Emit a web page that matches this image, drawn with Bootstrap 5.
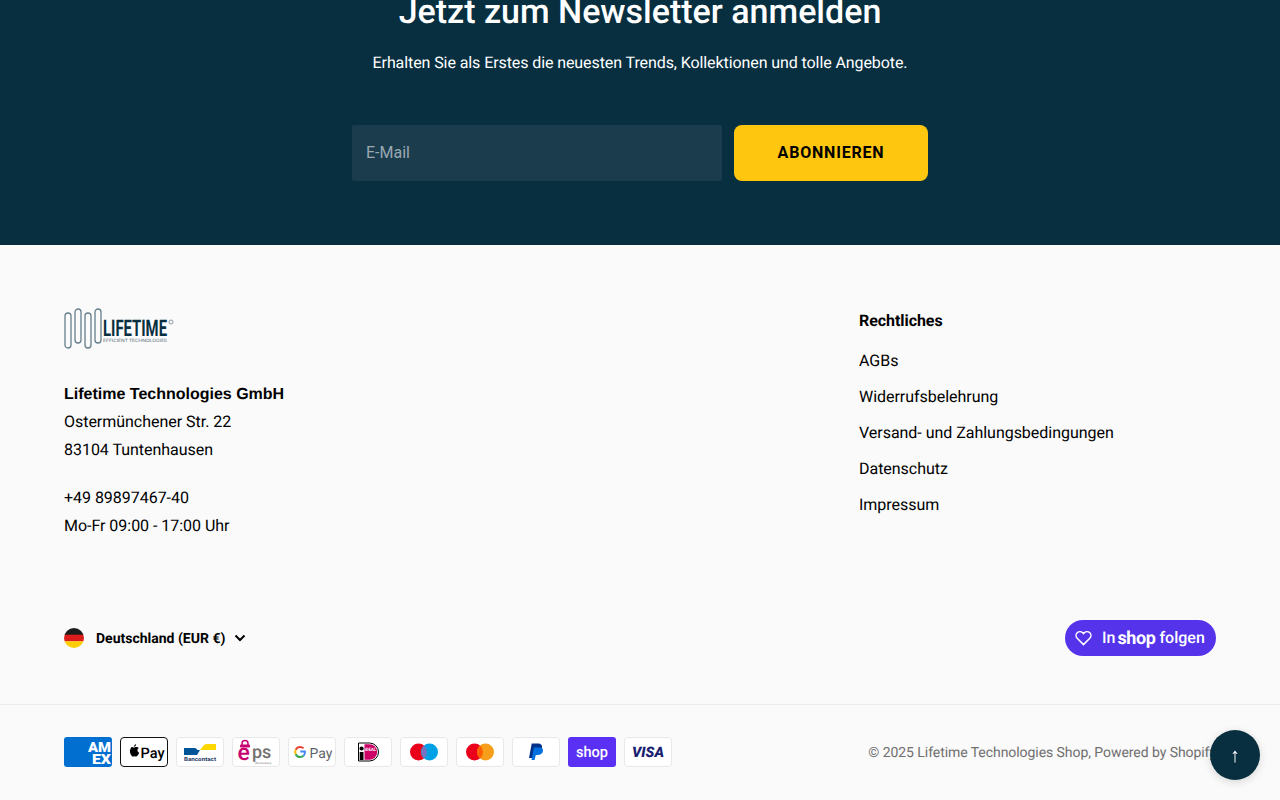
<!DOCTYPE html>
<html lang="de">
<head>
    <meta charset="utf-8">
    <title>Lifetime Technologies Shop</title>
    <link href="https://cdn.jsdelivr.net/npm/bootstrap@5.3.0/dist/css/bootstrap.min.css" rel="stylesheet">
    <style>
        html, body { height: 800px; overflow: hidden; }
        body { font-family: Roboto, "Liberation Sans", sans-serif; font-size: 16px; background: #fafafa; color: #000; text-rendering: geometricPrecision; }
        .news-block { background: #082f40; height: 245px; color: #fff; }
        .news-title { font-family: Roboto, sans-serif; font-size: 34px; line-height: 44px; font-weight: 500; margin: -10px 0 0; }
        .news-text { line-height: 24px; margin: 17px 0 0; letter-spacing: -0.09px; }
        .news-form { width: 576px; margin-top: 50px; }
        .news-input { flex: 1 1 auto; height: 56px; background: #1a3c4d; border: 0; border-radius: 2px; padding: 0 14px 2px; color: #fff; font-size: 16px; outline: 0; }
        .news-input::placeholder { color: #9aa9b1; opacity: 1; }
        .news-btn { width: 194px; height: 56px; background: #ffc60f; border: 0; border-radius: 8px; color: #000; font-weight: 700; font-size: 16px; letter-spacing: 0.8px; }
        .foot-main { padding: 63px 64px 0; height: 365px; }
        .foot-logo { display: block; width: 112px; height: 42px; overflow: visible; }
        .foot-company { font-family: "Liberation Sans", sans-serif; font-weight: 700; line-height: 28px; margin-top: 31px; margin-bottom: -1px; }
        .foot-line { line-height: 28px; letter-spacing: -0.03px; }
        .foot-gap { margin-top: 20px; }
        .legal-col { width: 357px; padding-top: 1px; }
        .legal-head { font-weight: 700; line-height: 24px; margin-bottom: 16px; letter-spacing: -0.06px; }
        .legal-link { display: block; color: #000; text-decoration: none; line-height: 24px; margin-bottom: 12px; letter-spacing: -0.03px; }
        .country-row { padding: 0 64px; height: 36px; margin-top: 10px; }
        .country-flag { width: 20px; height: 20px; border-radius: 50%; overflow: hidden; flex: none; }
        .country-name { font-size: 14px; font-weight: 700; margin-left: 12px; margin-right: 9px; padding-top: 2px; }
        .shop-follow { width: 151px; height: 36px; background: #5433eb; border-radius: 18px; color: #fff; font-size: 16px; font-weight: 500; padding-left: 10px; }
        .shop-heart { margin-right: 10px; }
        .shop-word { font-weight: 700; font-size: 18px; letter-spacing: -0.4px; margin: 0 4px 0 2px; }
        .foot-bottom { border-top: 1px solid #ececec; margin-top: 48px; padding: 32px 64px 0; }
        .pay-icons { gap: 8px; }
        .pay-icons svg { display: block; width: 48px; height: 30px; }
        .copy-text { font-size: 14px; color: #6f6f6f; white-space: nowrap; padding-top: 2px; letter-spacing: -0.06px; }
        .top-btn { right: 20px; bottom: 20px; width: 50px; height: 50px; background: #082f40; color: #fff; border-radius: 50%; font-size: 20px; box-shadow: 0 2px 8px rgba(0,0,0,.15); }
    </style>
</head>
<body>
    <!-- Newsletter -->
    <section class="news-block text-center d-flex flex-column align-items-center">
        <h2 class="news-title">Jetzt zum Newsletter anmelden</h2>
        <p class="news-text">Erhalten Sie als Erstes die neuesten Trends, Kollektionen und tolle Angebote.</p>
        <form class="news-form d-flex gap-2 justify-content-between">
            <input class="news-input" type="email" placeholder="E-Mail">
            <button class="news-btn ms-1" type="button">ABONNIEREN</button>
        </form>
    </section>

    <footer>
        <div class="foot-main d-flex justify-content-between">
            <div>
                <svg class="foot-logo" viewBox="0 0 112 42">
                    <g fill="none" stroke="#667f8b" stroke-width="1.300">
                        <rect x="1" y="5" width="6" height="35" rx="3"/>
                        <rect x="11" y="1" width="6" height="34" rx="3"/>
                        <rect x="21" y="5" width="6" height="35" rx="3"/>
                        <rect x="31" y="1" width="6" height="34" rx="3"/>
                    </g>
                    <text x="39" y="28" font-family="Roboto, sans-serif" font-size="23" font-weight="700" fill="#082f40" textLength="64" lengthAdjust="spacingAndGlyphs">LIFETIME</text>
                    <text x="39" y="33.500" font-family="Roboto, sans-serif" font-size="4.500" fill="#5a7280" textLength="64" lengthAdjust="spacingAndGlyphs">EFFICIENT TECHNOLOGIES</text>
                    <circle cx="107" cy="14" r="2" fill="none" stroke="#8a9aa3" stroke-width="1"/>
                </svg>
                <div class="foot-company">Lifetime Technologies GmbH</div>
                <div class="foot-line">Ostermünchener Str. 22</div>
                <div class="foot-line">83104 Tuntenhausen</div>
                <div class="foot-line foot-gap">+49 89897467-40</div>
                <div class="foot-line">Mo-Fr 09:00 - 17:00 Uhr</div>
            </div>
            <div class="legal-col">
                <div class="legal-head">Rechtliches</div>
                <a class="legal-link" href="#">AGBs</a>
                <a class="legal-link" href="#">Widerrufsbelehrung</a>
                <a class="legal-link" href="#">Versand- und Zahlungsbedingungen</a>
                <a class="legal-link" href="#">Datenschutz</a>
                <a class="legal-link" href="#">Impressum</a>
            </div>
        </div>

        <div class="country-row d-flex align-items-center justify-content-between">
            <div class="d-flex align-items-center">
                <svg class="country-flag" viewBox="0 0 20 20">
                    <rect width="20" height="7" fill="#1c1c1c"/>
                    <rect y="6.700" width="20" height="6.700" fill="#dd1c1c"/>
                    <rect y="13.300" width="20" height="6.700" fill="#ffce00"/>
                </svg>
                <span class="country-name">Deutschland (EUR €)</span>
                <svg width="12" height="8" viewBox="0 0 12 8"><path d="M1.500 1.500 6 6l4.500-4.500" fill="none" stroke="#000" stroke-width="2"/></svg>
            </div>
            <div class="shop-follow d-flex align-items-center">
                <svg width="17" height="16" viewBox="0 0 17 16" class="shop-heart"><path d="M8.500 14.600 2.200 8.300a3.900 3.900 0 0 1 0-5.500 3.900 3.900 0 0 1 5.500 0l.8.8.8-.8a3.900 3.900 0 0 1 5.500 0 3.900 3.900 0 0 1 0 5.500z" fill="none" stroke="#fff" stroke-width="1.500"/></svg>
                <span>In</span><span class="shop-word">shop</span><span>folgen</span>
            </div>
        </div>

        <div class="foot-bottom d-flex align-items-center justify-content-between">
            <div class="pay-icons d-flex">
                <!-- amex -->
                <svg viewBox="0 0 48 30">
                    <rect width="48" height="30" rx="3" fill="#016fd0"/>
                    <text x="24" y="15" font-family="Roboto, sans-serif" font-weight="900" font-size="14" fill="#fff" textLength="23" lengthAdjust="spacingAndGlyphs">AM</text>
                    <text x="28" y="26.500" font-family="Roboto, sans-serif" font-weight="900" font-size="14" fill="#fff" textLength="19" lengthAdjust="spacingAndGlyphs">EX</text>
                </svg>
                <!-- apple pay -->
                <svg viewBox="0 0 48 30">
                    <rect x=".5" y=".5" width="47" height="29" rx="3.500" fill="#fff" stroke="#111"/>
                    <path d="M14 12c1 0 1.700.6 2.400.6s1.500-.7 2.700-.6c.9 0 1.700.4 2.200 1.100-1.900 1.200-1.600 3.800.4 4.700-.4 1.200-1.100 2.400-2 3.300-.8.800-1.600.1-2.600.1s-1.800.7-2.600.1C12.600 19.300 11.700 16 13 13.800c.2-.5.500-1.300 1-1.800z" fill="#000" transform="translate(-2.500 -2)"/>
                    <path d="M13.800 9.800c0-1.300 1-2.400 2.300-2.600.1 1.300-1 2.600-2.300 2.600z" fill="#000"/>
                    <text x="20.500" y="20.500" font-family="Roboto, sans-serif" font-weight="500" font-size="14.500" fill="#000">Pay</text>
                </svg>
                <!-- bancontact -->
                <svg viewBox="0 0 48 30">
                    <rect x=".5" y=".5" width="47" height="29" rx="3.500" fill="#fff" stroke="#e8e8e8"/>
                    <path d="M8 11h10c1.500 0 2.500.5 3.500 2h2.500l-3 5H8z" fill="#005498"/>
                    <path d="M40 7h-9c-2 0-3 .8-3.800 2L24 13h16z" fill="#ffd800"/>
                    <text x="24" y="24" text-anchor="middle" font-family="Roboto, sans-serif" font-weight="700" font-size="5.500" fill="#1e3764" textLength="32" lengthAdjust="spacingAndGlyphs">Bancontact</text>
                </svg>
                <!-- eps -->
                <svg viewBox="0 0 48 30">
                    <rect x=".5" y=".5" width="47" height="29" rx="3.500" fill="#fff" stroke="#e8e8e8"/>
                    <rect x="8" y="7.500" width="10" height="3" rx="1" fill="#c8036f"/>
                    <path d="M10 8V6.500a3 3 0 0 1 6 0V8" fill="none" stroke="#c8036f" stroke-width="1.500"/>
                    <text x="5.500" y="23" font-family="Roboto, sans-serif" font-weight="500" font-size="23" fill="#c8036f">e</text>
                    <text x="20" y="20.500" font-family="Roboto, sans-serif" font-weight="500" font-size="18" fill="#71706f">ps</text>
                    <text x="23" y="26.500" font-family="Roboto, sans-serif" font-size="2.800" fill="#71706f">Überweisung</text>
                </svg>
                <!-- google pay -->
                <svg viewBox="0 0 48 30">
                    <rect x=".5" y=".5" width="47" height="29" rx="3.500" fill="#fff" stroke="#e8e8e8"/>
                    <path d="M15.500 11.300a4.800 4.800 0 0 0-3.300-1.300 5 5 0 0 0-4.500 2.800" fill="none" stroke="#ea4335" stroke-width="2"/>
                    <path d="M7.700 12.800a5 5 0 0 0 0 4.400" fill="none" stroke="#fbbc05" stroke-width="2"/>
                    <path d="M7.700 17.200a5 5 0 0 0 4.500 2.800c1.300 0 2.400-.4 3.300-1.200" fill="none" stroke="#34a853" stroke-width="2"/>
                    <path d="M15.500 18.800c1-.9 1.600-2.300 1.400-4.200h-4.600" fill="none" stroke="#4285f4" stroke-width="2"/>
                    <text x="21.500" y="20.500" font-family="Roboto, sans-serif" font-size="14" fill="#5f6368">Pay</text>
                </svg>
                <!-- ideal -->
                <svg viewBox="0 0 48 30">
                    <rect x=".5" y=".5" width="47" height="29" rx="3.500" fill="#fff" stroke="#e8e8e8"/>
                    <path d="M14.500 6h11a9 9 0 0 1 0 18h-11z" fill="#fff" stroke="#000" stroke-width="1"/>
                    <path d="M20.500 7.300h5a7.700 7.700 0 0 1 0 15.400h-5z" fill="#cc0066"/>
                    <rect x="15.700" y="15" width="3.800" height="8" fill="#000"/>
                    <circle cx="17.600" cy="11.500" r="2.100" fill="#000"/>
                    <text x="21" y="13.500" font-family="Roboto, sans-serif" font-weight="700" font-size="4.500" fill="#fff" textLength="11" lengthAdjust="spacingAndGlyphs">iDEAL</text>
                </svg>
                <!-- maestro -->
                <svg viewBox="0 0 48 30">
                    <rect x=".5" y=".5" width="47" height="29" rx="3.500" fill="#fff" stroke="#e8e8e8"/>
                    <circle cx="18.500" cy="15" r="8.500" fill="#eb001b"/>
                    <circle cx="29.500" cy="15" r="8.500" fill="#00a2e5"/>
                    <path d="M24 8.500a8.500 8.500 0 0 1 0 13 8.500 8.500 0 0 1 0-13z" fill="#7673c0"/>
                </svg>
                <!-- mastercard -->
                <svg viewBox="0 0 48 30">
                    <rect x=".5" y=".5" width="47" height="29" rx="3.500" fill="#fff" stroke="#e8e8e8"/>
                    <circle cx="18.500" cy="15" r="8.500" fill="#eb001b"/>
                    <circle cx="29.500" cy="15" r="8.500" fill="#f79e1b"/>
                    <path d="M24 8.500a8.500 8.500 0 0 1 0 13 8.500 8.500 0 0 1 0-13z" fill="#ff5f00"/>
                </svg>
                <!-- paypal -->
                <svg viewBox="0 0 48 30">
                    <rect x=".5" y=".5" width="47" height="29" rx="3.500" fill="#fff" stroke="#e8e8e8"/>
                    <path d="M20.500 21h-3.500l2.700-14.500h6c3.300 0 4.800 1.700 4.200 4.400-.7 2.900-3 4.100-5.800 4.100h-2.300z" fill="#003087"/>
                    <path d="M22.500 23h-3l2.400-12.500h5.500c2.900 0 4.100 1.500 3.500 3.800-.6 2.600-2.600 3.700-5.100 3.700h-2z" fill="#0070e0"/>
                </svg>
                <!-- shop pay -->
                <svg viewBox="0 0 48 30">
                    <rect width="48" height="30" rx="3" fill="#5a31f4"/>
                    <text x="24" y="19.500" text-anchor="middle" font-family="Roboto, sans-serif" font-weight="500" font-size="15" fill="#fff" textLength="32" lengthAdjust="spacingAndGlyphs">shop</text>
                </svg>
                <!-- visa -->
                <svg viewBox="0 0 48 30">
                    <rect x=".5" y=".5" width="47" height="29" rx="3.500" fill="#fff" stroke="#e8e8e8"/>
                    <text x="24" y="20" text-anchor="middle" font-family="Roboto, sans-serif" font-weight="900" font-style="italic" font-size="14.500" fill="#1a1f71" textLength="32" lengthAdjust="spacingAndGlyphs">VISA</text>
                </svg>
            </div>
            <div class="copy-text">© 2025 Lifetime Technologies Shop, Powered by Shopify</div>
        </div>
    </footer>

    <div class="top-btn position-fixed d-flex align-items-center justify-content-center">↑</div>

    <script src="https://cdn.jsdelivr.net/npm/bootstrap@5.3.0/dist/js/bootstrap.bundle.min.js"></script>
</body>
</html>
